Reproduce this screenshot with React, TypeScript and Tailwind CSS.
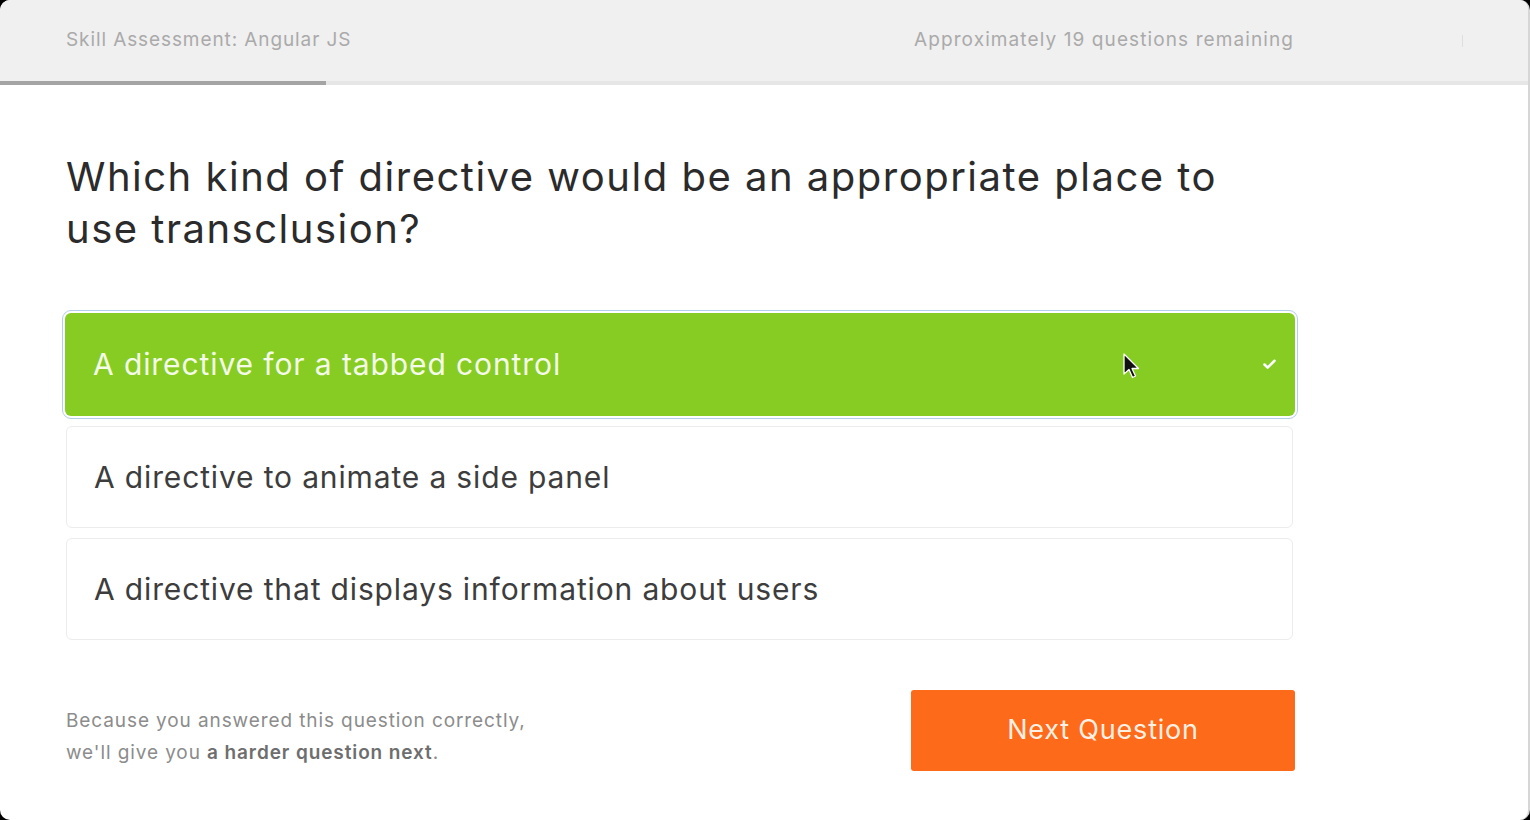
import { Check } from 'lucide-react';

const options = [
  { id: 1, label: 'A directive for a tabbed control', correct: true },
  { id: 2, label: 'A directive to animate a side panel', correct: false },
  { id: 3, label: 'A directive that displays information about users', correct: false },
];

export default function App() {
  return (
    <div className="h-[820px] w-[1530px] bg-black font-['Inter',sans-serif]">
      <div className="relative flex h-full flex-col overflow-hidden rounded-[10px] border-r-2 border-[#d6d6d6] bg-white">
        <header className="flex h-[81px] items-center bg-[#f0f0f0] pl-[66px] text-[19px] text-[#aaaaaa]">
          <p className="w-[848px] tracking-[0.9px]">Skill Assessment: Angular JS</p>
          <p className="w-[548px] tracking-[1.1px]">Approximately 19 questions remaining</p>
          <div className="h-[12px] w-px bg-[#dedede]" />
        </header>
        <div className="h-[4px] bg-[#e6e6e6]">
          <div className="h-full w-[326px] bg-[#a4a4a4]" />
        </div>

        <main className="w-[1295px] pl-[66px]">
          <h1 className="mt-[66px] text-[40px] leading-[52px] tracking-[1.5px] text-[#2b2b2b]">
            Which kind of directive would be an appropriate place to
            <br />
            use transclusion?
          </h1>

          <div className="mt-[58px] flex flex-col gap-[10px]">
            {options.map((option) =>
              option.correct ? (
                <div
                  key={option.id}
                  className="-ml-px flex h-[103px] w-[1230px] items-center justify-between rounded-[6px] bg-[#87cc22] pl-[28px] pr-[18px] text-[30px] tracking-[0.9px] text-[#f4fbe8] outline outline-1 outline-offset-2 outline-[#b3cfea]"
                >
                  <span>{option.label}</span>
                  <Check className="size-[15px] text-white" strokeWidth={4} />
                </div>
              ) : (
                <div
                  key={option.id}
                  className="flex h-[102px] w-[1227px] items-center rounded-[6px] border border-[#ececec] pl-[27px] text-[30px] tracking-[0.85px] text-[#3d3d3d]"
                >
                  {option.label}
                </div>
              )
            )}
          </div>

          <div className="mt-[50px] flex items-start justify-between">
            <p className="mt-[15px] text-[19px] leading-[32px] tracking-[0.9px] text-[#8c8c8c]">
              Because you answered this question correctly,
              <br />
              we&apos;ll give you{' '}
              <span className="font-semibold text-[#6e6e6e]">a harder question next</span>.
            </p>
            <button className="h-[81px] w-[384px] rounded-[3px] bg-[#fd6a1a] text-[27px] tracking-[0.8px] text-[#fff0e4]">
              Next Question
            </button>
          </div>
        </main>

        {/* mouse pointer over the selected answer */}
        <svg
          className="absolute left-[1123px] top-[353px]"
          width="18"
          height="28"
          viewBox="0 0 18 28"
        >
          <path
            d="M1 1 L1 21 L6 16.5 L9.5 24.5 L12.5 23 L9 15.5 L15.5 15.5 Z"
            fill="#111"
            stroke="#fff"
            strokeWidth="1.3"
            strokeLinejoin="round"
          />
        </svg>
      </div>
    </div>
  );
}
